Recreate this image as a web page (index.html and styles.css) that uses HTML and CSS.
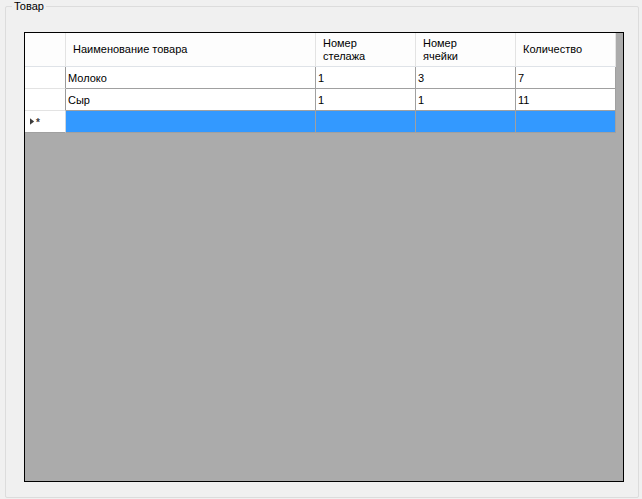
FILE: index.html
```html
<!DOCTYPE html>
<html lang="ru">
<head>
    <meta charset="UTF-8" />
    <title>Товар</title>
    <link rel="stylesheet" href="styles.css">
</head>
<body>
    <div class="group">
        <span class="group-title">Товар</span>

        <div class="grid">
            <div class="grid-rows">
                <!-- Header -->
                <div class="cell corner"></div>
                <div class="cell head head-wide">Наименование товара</div>
                <div class="cell head">Номер<br>стелажа</div>
                <div class="cell head">Номер<br>ячейки</div>
                <div class="cell head head-single">Количество</div>

                <!-- Rows -->
                <div class="cell row-head"></div>
                <div class="cell data">Молоко</div>
                <div class="cell data">1</div>
                <div class="cell data">3</div>
                <div class="cell data">7</div>

                <div class="cell row-head"></div>
                <div class="cell data">Сыр</div>
                <div class="cell data">1</div>
                <div class="cell data">1</div>
                <div class="cell data">11</div>

                <!-- New row (selected) -->
                <div class="cell row-head new-row-head">
                    <svg class="indicator" viewBox="0 0 6 8" aria-hidden="true">
                        <polygon points="0,0 5,4 0,8" fill="#3c3c3c" />
                    </svg><span class="star">*</span>
                </div>
                <div class="cell data selected"></div>
                <div class="cell data selected"></div>
                <div class="cell data selected"></div>
                <div class="cell data selected"></div>
            </div>
        </div>
    </div>
</body>
</html>
```

FILE: styles.css
```css
*, *::before, *::after {
    box-sizing: border-box;
}

body {
    margin: 0;
    background: #f0f0f0;
    font-family: 'Liberation Sans', Arial, sans-serif;
    font-size: 11px;
    color: #000;
    width: 642px;
    height: 499px;
    overflow: hidden;
}

.group {
    position: relative;
    margin: 6px 0 0 5px;
    width: 634px;
    height: 492px;
    border: 1px solid #dcdcdc;
    border-radius: 2px;
    padding: 25px 0 0 18px;
}

.group-title {
    position: absolute;
    top: -7px;
    left: 6px;
    padding: 0 2px;
    background: #f0f0f0;
    line-height: 13px;
}

.grid {
    width: 600px;
    height: 450px;
    border: 1px solid #000;
    background: #ababab;
}

.grid-rows {
    display: grid;
    grid-template-columns: 41px 250px 100px 100px 100px;
    grid-template-rows: 34px 22px 22px 22px;
}

.cell {
    border-right: 1px solid #a0a0a0;
    border-bottom: 1px solid #a0a0a0;
    background: #fff;
    white-space: nowrap;
    overflow: hidden;
}

.corner,
.head {
    background: #fdfdfd;
    border-right-color: #e3e3e3;
    border-bottom-color: #dfe3e8;
}

.head {
    padding: 4px 0 0 7px;
    line-height: 13px;
}

.head-wide,
.head-single {
    display: flex;
    align-items: center;
    padding-top: 0;
}

.row-head {
    background: #fff;
    border-right-color: #9a9a9a;
    border-bottom-color: #e3e3e3;
}

.data {
    padding: 1px 0 0 2px;
    line-height: 21px;
}

.selected {
    background: #3399ff;
}

.new-row-head {
    display: flex;
    align-items: center;
    padding-left: 5px;
    border-right-color: #cfd6de;
    border-bottom-color: #a0a0a0;
}

.indicator {
    width: 5px;
    height: 7px;
}

.star {
    margin-left: 1px;
    font-size: 10px;
    font-weight: bold;
    color: #3c3c3c;
    line-height: 10px;
    margin-top: 3px;
}
```
